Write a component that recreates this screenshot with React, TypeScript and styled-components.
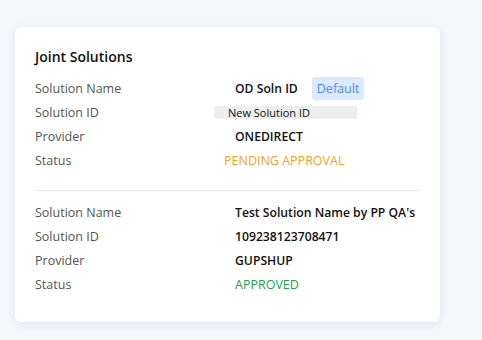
import React from "react";
import styled, { createGlobalStyle } from "styled-components";

const GlobalStyle = createGlobalStyle`
  html, body {
    margin: 0;
    padding: 0;
    background: #f5f6fa;
    font-family: "Open Sans", "Noto Sans", sans-serif;
  }
`;

type Status = "pending" | "approved";

type Solution = {
  name: string;
  id: string;
  provider: string;
  status: Status;
  isDefault?: boolean;
  idEditable?: boolean;
};

const solutions: Solution[] = [
  {
    name: "OD Soln ID",
    id: "New Solution ID",
    provider: "ONEDIRECT",
    status: "pending",
    isDefault: true,
    idEditable: true,
  },
  {
    name: "Test Solution Name by PP QA's",
    id: "109238123708471",
    provider: "GUPSHUP",
    status: "approved",
  },
];

const Page = styled.div`
  padding: 27px 42px 18px 15px;
`;

const Card = styled.div`
  background: #fff;
  border-radius: 6px;
  box-shadow: 0 2px 10px rgba(30, 40, 90, 0.08);
  padding: 20px 20px 26px 20px;
`;

const Title = styled.h3`
  margin: 0 0 9px 0;
  font-size: 14px;
  line-height: 20px;
  font-weight: 600;
  color: #111;
`;

const Group = styled.div`
  display: flex;
  flex-direction: column;
`;

const Row = styled.div`
  display: grid;
  grid-template-columns: 200px 1fr;
  align-items: center;
  height: 24px;
`;

const Label = styled.span`
  font-size: 12.5px;
  color: #555;
`;

const Value = styled.div`
  display: flex;
  align-items: center;
  gap: 14px;
  font-size: 12.2px;
  font-weight: 600;
  color: #111;
`;

const DefaultBadge = styled.span`
  background: #dde9fd;
  color: #4b8ff7;
  font-weight: 400;
  font-size: 12.5px;
  border-radius: 3px;
  padding: 3px 5px;
`;

const IdInput = styled.div`
  margin-left: -21px;
  width: 143px;
  height: 13px;
  background: #eeeeee;
  border-radius: 2px;
  padding-left: 14px;
  box-sizing: border-box;
  font-size: 11px;
  line-height: 13px;
  font-weight: 400;
  color: #111;
`;

const StatusText = styled.span<{ $status: Status }>`
  font-size: 12.5px;
  font-weight: ${(p) => (p.$status === "approved" ? 500 : 400)};
  color: ${(p) => (p.$status === "approved" ? "#23a14a" : "#f7a11f")};
  margin-left: ${(p) => (p.$status === "pending" ? "-11px" : "0")};
`;

const Divider = styled.hr`
  border: none;
  border-top: 1px solid #ebebeb;
  margin: 18px 0 9px 0;
`;

const statusLabel: Record<Status, string> = {
  pending: "PENDING APPROVAL",
  approved: "APPROVED",
};

const SolutionGroup: React.FC<{ s: Solution }> = ({ s }) => (
  <Group>
    <Row>
      <Label>Solution Name</Label>
      <Value>
        {s.name}
        {s.isDefault && <DefaultBadge>Default</DefaultBadge>}
      </Value>
    </Row>
    <Row>
      <Label>Solution ID</Label>
      <Value>{s.idEditable ? <IdInput>{s.id}</IdInput> : s.id}</Value>
    </Row>
    <Row>
      <Label>Provider</Label>
      <Value>{s.provider}</Value>
    </Row>
    <Row>
      <Label>Status</Label>
      <Value>
        <StatusText $status={s.status}>{statusLabel[s.status]}</StatusText>
      </Value>
    </Row>
  </Group>
);

export default function App() {
  return (
    <>
      <GlobalStyle />
      <Page>
        <Card>
          <Title>Joint Solutions</Title>
          {solutions.map((s, i) => (
            <React.Fragment key={s.id}>
              {i > 0 && <Divider />}
              <SolutionGroup s={s} />
            </React.Fragment>
          ))}
        </Card>
      </Page>
    </>
  );
}
